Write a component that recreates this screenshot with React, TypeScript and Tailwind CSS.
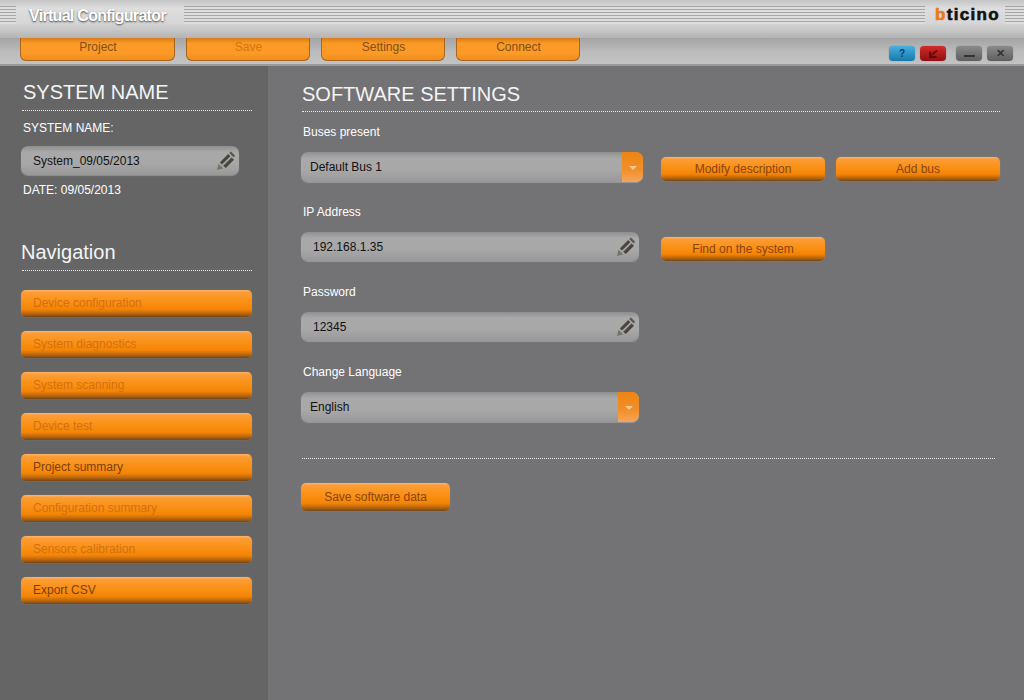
const font = "font-['Liberation_Sans',Arial,sans-serif]";
const orange =
  "bg-[linear-gradient(#fbb46c_0%,#fb9c34_10%,#fa9014_45%,#f38406_72%,#b8650c_88%,#74451c_100%)] shadow-[0_0_1px_rgba(220,200,180,0.5)]";

const stripes =
  "bg-[repeating-linear-gradient(#a6a6a6_0px,#a6a6a6_1px,#dedede_1px,#dedede_3px)]";

const navItems = [
  { label: "Device configuration", on: false },
  { label: "System diagnostics", on: false },
  { label: "System scanning", on: false },
  { label: "Device test", on: false },
  { label: "Project summary", on: true },
  { label: "Configuration summary", on: false },
  { label: "Sensors calibration", on: false },
  { label: "Export CSV", on: true },
];

const Pencil = () => (
  <svg width="20" height="20" viewBox="0 0 20 20" className="shrink-0">
    <path d="M1 19l1.6-6.2 4.6 4.6z" fill="#77736c" />
    <path d="M3.8 11.4l8.4-8.4 2.2 2.2-8.4 8.4z" fill="#4a463f" />
    <path d="M7.2 14.8l8.4-8.4 2.4 2.4-8.2 8.2z" fill="#4a463f" />
    <path d="M13.2 2l1.8-1.4 4 4-1.3 2z" fill="#5c5850" />
  </svg>
);

const Arrow = () => (
  <div className="flex h-full w-[21px] shrink-0 items-center justify-center bg-[linear-gradient(#ee8512,#f28f2c_60%,#f6a55a)]">
    <div className="mt-[1px] h-0 w-0 border-x-[4px] border-t-[4px] border-x-transparent border-t-[#fbc88e]" />
  </div>
);

function Field({ value, w, h = "h-[29px]", pad = "pl-3", select }: { value: string; w: string; h?: string; pad?: string; select?: boolean }) {
  return (
    <div
      className={`flex ${w} ${h} items-center overflow-hidden rounded-[7px] bg-[linear-gradient(#8f8f8f,#a9a9a9_22%,#a8a8a8_60%,#989898)] shadow-[0_1px_1px_rgba(190,190,190,0.5)]`}
    >
      <span className={`flex-1 ${pad} ${select ? "pb-[1px]" : ""} text-[12px] text-[#111]`}>{value}</span>
      {select ? <Arrow /> : <span className="pr-[3px]"><Pencil /></span>}
    </div>
  );
}

function OrangeButton({ label, w, h = "h-[24px]" }: { label: string; w: string; h?: string }) {
  return (
    <button className={`${w} ${h} rounded-[5px] ${orange} pb-[1px] text-center text-[12px] text-[#8a4410]`}>
      {label}
    </button>
  );
}

function TopTab({ label, w, dim }: { label: string; w: string; dim?: boolean }) {
  return (
    <button
      className={`h-[23px] ${w} rounded-b-[6px] border-x border-b border-[#a9641e] bg-[linear-gradient(#d97c18,#fb9a26_25%,#fb9a26_70%,#f08c1c)] pb-[5px] pl-[1px] text-center text-[12px] ${dim ? "text-[#d4750f]" : "text-[#80501c]"}`}
    >
      {label}
    </button>
  );
}

function WinButton({ color, children }: { color: string; children: React.ReactNode }) {
  return (
    <div className={`flex h-[15px] w-[26px] items-center justify-center rounded-[4px] ${color} shadow-[0_0_1px_rgba(60,60,60,0.7)]`}>
      {children}
    </div>
  );
}

const Dots = ({ className }: { className: string }) => (
  <div className={`border-t border-dotted border-[#ece9e6] ${className}`} />
);

export default function App() {
  return (
    <div className={`flex h-[700px] w-[1024px] flex-col overflow-hidden bg-[#737274] ${font}`}>
      {/* title bar */}
      <div className="flex h-[38px] shrink-0 items-start bg-[linear-gradient(#c4c4c4,#dedede_22%,#d6d6d6_60%,#b4b4b4)] pt-[6px]">
        <div className={`h-[18px] w-[16px] ${stripes}`} />
        <div className="w-[168px] pl-[13px] text-[16px] leading-[20px] font-bold tracking-[-0.7px] text-white [text-shadow:0_1px_2px_#444]">
          Virtual Configurator
        </div>
        <div className={`h-[18px] w-[741px] ${stripes}`} />
        <div className="w-[80px] pl-[10px] text-[17px] leading-[18px] font-bold tracking-[1.3px] text-[#111] [-webkit-text-stroke:0.6px_#111]">
          <span className="text-[#e8781c] [-webkit-text-stroke:0.6px_#e8781c]">b</span>ticino
        </div>
        <div className={`h-[18px] flex-1 ${stripes}`} />
      </div>

      {/* toolbar */}
      <div className="flex h-[28px] shrink-0 items-start justify-between bg-[linear-gradient(#a4a4a4,#bcbcbc_50%,#c4c4c4)] pl-[20px] pr-[11px] shadow-[inset_0_-2px_0_#9a9a9a]">
        <div className="flex items-start gap-[11px]">
          <TopTab label="Project" w="w-[155px]" />
          <TopTab label="Save" w="w-[124px]" dim />
          <TopTab label="Settings" w="w-[124px]" />
          <TopTab label="Connect" w="w-[124px]" />
        </div>
        <div className="mt-[8px] flex">
          <WinButton color="bg-[linear-gradient(#48b0e0,#1679ab)]">
            <span className="text-[10px] leading-none font-bold text-[#0b3f66]">?</span>
          </WinButton>
          <div className="ml-[5px]">
            <WinButton color="bg-[linear-gradient(#d42a2a,#8f0f10)]">
              <svg width="12" height="10" viewBox="0 0 12 10">
                <path d="M10 1.5 5 5.5M3 2.5v5.5h6.5M5 5.5 3 8" stroke="#640c0c" strokeWidth="1.8" fill="none" />
              </svg>
            </WinButton>
          </div>
          <div className="ml-[10px]">
            <WinButton color="bg-[linear-gradient(#8a8a8a,#5f5f5f)]">
              <div className="mt-[4px] h-[2px] w-[11px] bg-[#333]" />
            </WinButton>
          </div>
          <div className="ml-[5px]">
            <WinButton color="bg-[linear-gradient(#8a8a8a,#5f5f5f)]">
              <span className="text-[11px] leading-none font-bold text-[#333]">✕</span>
            </WinButton>
          </div>
        </div>
      </div>

      <div className="flex flex-1">
        {/* sidebar */}
        <aside className="w-[268px] shrink-0 bg-[#656566] pl-[21px] pr-[16px] pt-[13px] text-white">
          <h2 className="pl-[2px] text-[20px] leading-[26px] text-[#f4f4f4]">SYSTEM NAME</h2>
          <Dots className="mt-[5px] ml-[1px]" />
          <p className="mt-[10px] pl-[2px] text-[12px] leading-[14px]">SYSTEM NAME:</p>
          <div className="mt-[11px]"><Field value="System_09/05/2013" w="w-[218px]" /></div>
          <p className="mt-[8px] pl-[2px] text-[12px] leading-[14px]">DATE: 09/05/2013</p>
          <h2 className="mt-[42px] text-[20px] leading-[26px] text-[#f4f4f4]">Navigation</h2>
          <Dots className="mt-[5px] ml-[1px]" />
          <div className="mt-[19px] flex flex-col gap-[14px]">
            {navItems.map((item) => (
              <button
                key={item.label}
                className={`h-[27px] w-[231px] rounded-[5px] ${orange} pb-[2px] pl-3 text-left text-[12px] ${item.on ? "text-[#7a3f10]" : "text-[#d4700f]"}`}
              >
                {item.label}
              </button>
            ))}
          </div>
        </aside>

        {/* settings */}
        <main className="flex-1 pl-[34px] pr-[24px] pt-[15px] text-[12px] text-white">
          <h1 className="text-[20px] leading-[26px] text-[#f4f4f4]">SOFTWARE SETTINGS</h1>
          <Dots className="mt-[4px]" />

          <p className="mt-[13px] pl-[1px] leading-[14px]">Buses present</p>
          <div className="mt-[13px] -ml-[1px] flex items-start">
            <Field value="Default Bus 1" w="w-[342px]" h="h-[30px]" pad="pl-[9px]" select />
            <div className="mt-[5px] ml-[18px] flex gap-[11px]">
              <OrangeButton label="Modify description" w="w-[164px]" />
              <OrangeButton label="Add bus" w="w-[164px]" />
            </div>
          </div>

          <p className="mt-[23px] pl-[1px] leading-[14px]">IP Address</p>
          <div className="mt-[13px] -ml-[1px] flex items-start">
            <Field value="192.168.1.35" w="w-[338px]" />
            <div className="mt-[5px] ml-[22px]">
              <OrangeButton label="Find on the system" w="w-[164px]" />
            </div>
          </div>

          <p className="mt-[24px] pl-[1px] leading-[14px]">Password</p>
          <div className="mt-[13px] -ml-[1px]"><Field value="12345" w="w-[338px]" /></div>

          <p className="mt-[24px] pl-[1px] leading-[14px]">Change Language</p>
          <div className="mt-[13px] -ml-[1px]"><Field value="English" w="w-[338px]" h="h-[30px]" pad="pl-[9px]" select /></div>

          <Dots className="mt-[36px] w-[693px]" />
          <div className="mt-[24px] -ml-[1px]">
            <OrangeButton label="Save software data" w="w-[149px]" h="h-[28px]" />
          </div>
        </main>
      </div>
    </div>
  );
}
